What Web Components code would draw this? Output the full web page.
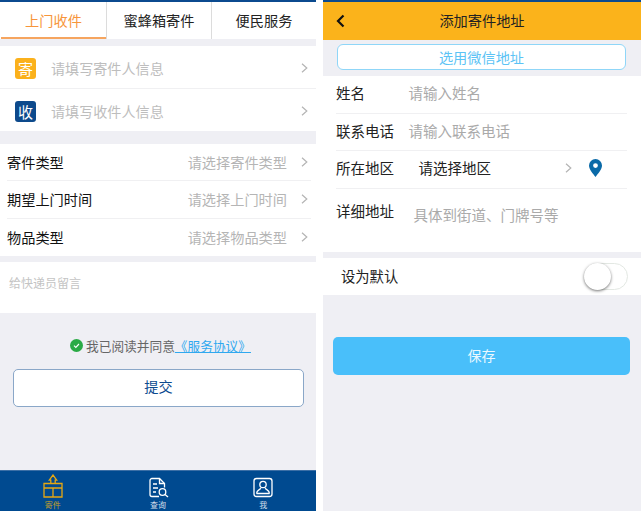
<!DOCTYPE html>
<html lang="zh">
<head>
<meta charset="utf-8">
<title>寄件</title>
<style>
  html, body { margin: 0; padding: 0; background: #fff; }
  body { font-family: "Noto Sans CJK SC", "Liberation Sans", sans-serif; }
  #screens { display: flex; gap: 7px; width: 641px; height: 511px; overflow: hidden; }
</style>
</head>
<body>
<div id="screens">
  <pickup-page></pickup-page>
  <address-page></address-page>
</div>

<script>
const CHEVRON = `<svg width="7" height="10" viewBox="0 0 7 10"><path d="M1 .8L5.800 5 1 9.200" fill="none" stroke="#b4b4b4" stroke-width="1.200"/></svg>`;

//
// one row with a label, a hint and a chevron
//
class PickRow extends HTMLElement {
  constructor() {
    super();
    this.attachShadow({mode: 'open'});
    this.shadowRoot.innerHTML = `
      <style>
        :host { display: block; background: #fff; }
        .in {
          display: flex;
          align-items: center;
          box-sizing: border-box;
          height: 37.330px;
          margin-left: 7px;
          padding-right: 3px;
          margin-right: 5px;
          font-size: 14.200px;
          color: #111;
        }
        :host([line]) .in { border-bottom: 1px solid #f0f0f2; }
        .hint { margin-left: auto; margin-right: 14px; color: #b5b5b5; }
      </style>
      <div class="in"><slot></slot><span class="hint">${this.getAttribute('hint')}</span>${CHEVRON}</div>
    `;
  }
}
customElements.define('pick-row', PickRow);

//
// sender / receiver row with the coloured square
//
class PartyRow extends HTMLElement {
  constructor() {
    super();
    this.attachShadow({mode: 'open'});
    this.shadowRoot.innerHTML = `
      <style>
        :host {
          display: flex;
          align-items: center;
          box-sizing: border-box;
          height: 42px;
          padding: 2px 8px 0 15px;
          background: #fff;
          font-size: 14.100px;
          color: #bdbdbd;
        }
        :host([line]) { height: 43px; border-bottom: 1px solid #f0f0f2; }
        .mark {
          width: 21px;
          height: 21px;
          margin-right: 15px;
          border-radius: 3px;
          background: ${this.getAttribute('color')};
          color: #fff;
          font-size: 15px;
          line-height: 21px;
          text-align: center;
        }
        svg { margin-left: auto; }
      </style>
      <span class="mark">${this.getAttribute('mark')}</span><slot></slot>${CHEVRON}
    `;
  }
}
customElements.define('party-row', PartyRow);

//
// tabs at the top of the pickup page
//
class TopTabs extends HTMLElement {
  constructor() {
    super();
    this.attachShadow({mode: 'open'});
    this.shadowRoot.innerHTML = `
      <style>
        :host { display: flex; height: 37px; border-top: 2px solid #0b4a8f; background: #fff; font-size: 14.200px; color: #222; }
        div { flex: 1; box-sizing: border-box; text-align: center; line-height: 36px; border-left: 1px solid #dcdcdc; }
        div.on { border-left: none; flex: none; width: 105px; margin-left: 1px; color: #f7953b; border-bottom: 2px solid #f6a55f; }
      </style>
      <div class="on">上门收件</div><div>蜜蜂箱寄件</div><div>便民服务</div>
    `;
  }
}
customElements.define('top-tabs', TopTabs);

//
// bottom navigation
//
class BottomNav extends HTMLElement {
  constructor() {
    super();
    this.attachShadow({mode: 'open'});
    this.shadowRoot.innerHTML = `
      <style>
        :host { display: flex; height: 41px; background: #004a90; box-shadow: inset 0 1px 0 #3c6fa6; }
        div { flex: 1; display: flex; flex-direction: column; align-items: center; padding-top: 4px; font-size: 8px; line-height: 11px; color: #d4dfea; }
        div.on { color: #c9a227; }
        svg { display: block; height: 24px; width: 24px; margin-bottom: 1px; }
      </style>
      <div class="on">
        <svg viewBox="0 0 24 24" fill="none" stroke="#e5a712" stroke-width="1.300">
          <path d="M3 9.500h18v13.500H3zM3 14h18M12 14v9M9.800 9.500V6.200H8.300L12 1l3.700 5.200h-1.500v3.300"/>
        </svg>
        寄件
      </div>
      <div>
        <svg viewBox="0 0 24 24" fill="none" stroke="#fff" stroke-width="1.300">
          <path d="M13 22.500H6a2 2 0 0 1-2-2V6.500a2 2 0 0 1 2-2h7.500l5 5v4"/>
          <path d="M13.500 4.500v5h5M7 10h4M7 14h5M7 18h3"/>
          <circle cx="16.500" cy="18" r="3.300"/>
          <path d="M19 20.500l3 2.500"/>
        </svg>
        查询
      </div>
      <div>
        <svg viewBox="0 0 24 24" fill="none" stroke="#fff" stroke-width="1.300">
          <rect x="3" y="4.500" width="18" height="18" rx="2.500"/>
          <circle cx="12" cy="10.500" r="3.200"/>
          <path d="M5.500 19.500c0-3 3-3.800 4.500-5.200M18.500 19.500c0-3-3-3.800-4.500-5.200M5.500 19.500h13"/>
        </svg>
        我
      </div>
    `;
  }
}
customElements.define('bottom-nav', BottomNav);

//
// left screen
//
class PickupPage extends HTMLElement {
  constructor() {
    super();
    this.attachShadow({mode: 'open'});
    this.shadowRoot.innerHTML = `
      <style>
        :host { display: flex; flex-direction: column; flex: none; width: 316px; height: 511px; background: #efeff4; }
        .group { margin-top: 7px; }
        .group.types { margin-top: 13px; }
        .note { height: 51px; margin-top: 6px; padding: 13px 0 0 9px; box-sizing: border-box; background: #fff; font-size: 12px; line-height: 16px; color: #c4c4c4; }
        .agree { display: flex; align-items: center; justify-content: center; height: 20px; margin-top: 23px; padding-left: 5px; font-size: 12.700px; color: #666; }
        .agree svg { margin-right: 3px; margin-top: -1px; }
        .agree a { color: #2fa8ef; text-decoration: underline; }
        .submit {
          display: block;
          box-sizing: border-box;
          height: 38px;
          margin: 13px 12px 0 13px;
          border: 1px solid #8aa7c8;
          border-radius: 5px;
          background: #fff;
          color: #0b4a8f;
          font-size: 14.200px;
          line-height: 33px;
          text-align: center;
        }
        bottom-nav { margin-top: auto; }
      </style>
      <top-tabs></top-tabs>
      <div class="group">
        <party-row mark="寄" color="#fbb11c" line>请填写寄件人信息</party-row>
        <party-row mark="收" color="#0d4a8c">请填写收件人信息</party-row>
      </div>
      <div class="group types">
        <pick-row hint="请选择寄件类型" line>寄件类型</pick-row>
        <pick-row hint="请选择上门时间" line>期望上门时间</pick-row>
        <pick-row hint="请选择物品类型">物品类型</pick-row>
      </div>
      <div class="note">给快递员留言</div>
      <div class="agree">
        <svg width="13" height="13" viewBox="0 0 13 13"><circle cx="6.500" cy="6.500" r="6.500" fill="#2aaa45"/><path d="M4 6.700l1.800 1.700L9 5" fill="none" stroke="#fff" stroke-width="1.100"/></svg>
        我已阅读并同意<a>《服务协议》</a>
      </div>
      <div class="submit">提交</div>
      <bottom-nav></bottom-nav>
    `;
  }
}
customElements.define('pickup-page', PickupPage);

//
// form row of the address screen
//
class FormRow extends HTMLElement {
  constructor() {
    super();
    this.attachShadow({mode: 'open'});
    this.shadowRoot.innerHTML = `
      <style>
        :host { display: block; margin: 0 14px 0 13px; font-size: 14.500px; color: #222; }
        .in { display: flex; align-items: center; box-sizing: border-box; height: 37.500px; padding-bottom: 3px; }
        :host([line]) .in { border-bottom: 1px solid #f0f0f2; }
        .lab { flex: none; width: 72.500px; }
        ::slotted(span) { color: #aaa; }
      </style>
      <div class="in"><span class="lab">${this.getAttribute('label')}</span><slot></slot></div>
    `;
  }
}
customElements.define('form-row', FormRow);

//
// switch, off state
//
class ToggleSwitch extends HTMLElement {
  constructor() {
    super();
    this.attachShadow({mode: 'open'});
    this.shadowRoot.innerHTML = `
      <style>
        :host { display: block; position: relative; box-sizing: border-box; width: 44px; height: 27px; border: 1px solid #e3e8e3; border-radius: 14px; background: #fff; }
        i { position: absolute; left: -1px; top: -1px; width: 27px; height: 27px; border-radius: 50%; background: #fff; box-shadow: 0 1px 3px rgba(0,0,0,.55); }
      </style>
      <i></i>
    `;
  }
}
customElements.define('toggle-switch', ToggleSwitch);

//
// right screen
//
class AddressPage extends HTMLElement {
  constructor() {
    super();
    this.attachShadow({mode: 'open'});
    this.shadowRoot.innerHTML = `
      <style>
        :host { display: flex; flex-direction: column; flex: none; width: 318px; height: 511px; background: #efeff4; }
        .head {
          display: flex;
          align-items: center;
          justify-content: center;
          position: relative;
          box-sizing: border-box;
          height: 40px;
          padding-bottom: 2px;
          border-top: 2px solid #0b4a8f;
          background: #fbb31b;
          font-size: 14.200px;
          color: #222;
        }
        .head svg { position: absolute; left: 13px; top: 12px; }
        .wechat {
          height: 26px;
          box-sizing: border-box;
          margin: 4px 15px 6px 14px;
          border: 1px solid #8fd6f8;
          border-radius: 6px;
          background: #fff;
          color: #5cc3f5;
          font-size: 14.200px;
          line-height: 25px;
          text-align: center;
        }
        .form { background: #fff; height: 176px; }
        .area { color: #222 !important; margin-left: 10px; }
        .area-tail { margin-left: auto; display: flex; align-items: center; gap: 17px; margin-right: 25px; }
        .detail { display: flex; margin: 0 14px 0 13px; padding-top: 12px; font-size: 14.500px; line-height: 20px; color: #222; }
        .detail b { flex: none; width: 77.500px; font-weight: normal; }
        .detail span { color: #aaa; margin-top: 4px; }
        .default {
          display: flex;
          align-items: center;
          justify-content: space-between;
          height: 37px;
          margin-top: 6px;
          padding: 0 13px 0 18px;
          background: #fff;
          font-size: 14.300px;
          color: #222;
        }
        .default span { margin-top: -2px; }
        .save {
          height: 38px;
          margin: 42px 11px 0 10px;
          border-radius: 5px;
          background: #49bffa;
          color: #eaf8ff;
          font-size: 14px;
          line-height: 36px;
          text-align: center;
        }
      </style>
      <div class="head">
        <svg width="9" height="14" viewBox="0 0 9 14"><path d="M7.500 1.500L2 7l5.500 5.500" fill="none" stroke="#111" stroke-width="2.200"/></svg>
        添加寄件地址
      </div>
      <div class="wechat">选用微信地址</div>
      <div class="form">
        <form-row label="姓名" line><span>请输入姓名</span></form-row>
        <form-row label="联系电话" line><span>请输入联系电话</span></form-row>
        <form-row label="所在地区" line>
          <span class="area">请选择地区</span>
          <div class="area-tail">
            ${CHEVRON}
            <svg width="13" height="18" viewBox="0 0 13 18"><path fill-rule="evenodd" d="M6.500 0a6.500 6.500 0 0 1 6.500 6.500c0 4-4 8-6.500 11.500C4 14.500 0 10.500 0 6.500A6.500 6.500 0 0 1 6.500 0zm0 4.200a2.400 2.400 0 1 0 0 4.800 2.400 2.400 0 0 0 0-4.800z" fill="#0a6aa8"/></svg>
          </div>
        </form-row>
        <div class="detail"><b>详细地址</b><span>具体到街道、门牌号等</span></div>
      </div>
      <div class="default"><span>设为默认</span><toggle-switch></toggle-switch></div>
      <div class="save">保存</div>
    `;
  }
}
customElements.define('address-page', AddressPage);
</script>
</body>
</html>
